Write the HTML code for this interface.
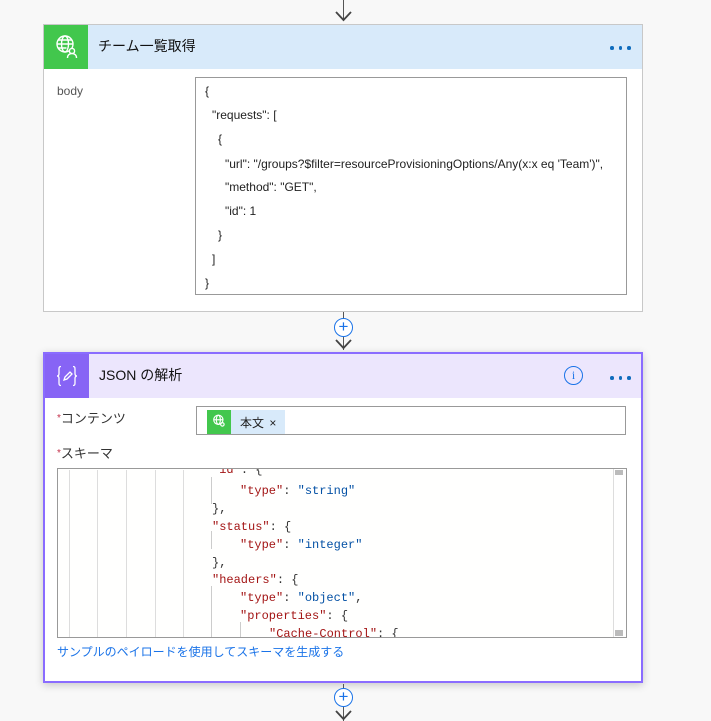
<!DOCTYPE html>
<html><head><meta charset="utf-8"><style>
*{margin:0;padding:0;box-sizing:border-box}
body{width:711px;height:721px;background:#f8f8f8;position:relative;overflow:hidden;font-family:"Liberation Sans","Noto Sans CJK JP",sans-serif;color:#222}
.a{position:absolute}
.line{position:absolute;width:1px;background:#555}
.dots{position:absolute;font-size:0}
.dots i{display:inline-block;width:3.5px;height:3.5px;border-radius:50%;background:#0f6cbd;margin-right:5px}
.t{position:absolute;font-size:12px;white-space:pre;line-height:14px}
.m{position:absolute;font-family:"Liberation Mono",monospace;font-size:12px;white-space:pre;line-height:14px;color:#333}
.k{color:#a31515}.s{color:#0451a5}
.g{position:absolute;top:1px;bottom:0;width:1px;background:#ddd}
</style></head><body>
<div class="line" style="left:343px;top:0;height:20px"></div>
<svg class="a" style="left:335px;top:10px" width="17" height="12"><path d="M1 2l7.5 8 7.5-8" fill="none" stroke="#444" stroke-width="1.8"/></svg>

<div class="a" style="left:43px;top:24px;width:600px;height:288px;background:#fff;border:1px solid #c8c8c8"></div>
<div class="a" style="left:44px;top:25px;width:598px;height:44px;background:#d8eafa"></div>
<div class="a" style="left:44px;top:25px;width:44px;height:44px;background:#42c74d"></div>
<svg class="a" style="left:54px;top:34px" width="26" height="26" viewBox="0 0 26 26" fill="none" stroke="#fff" stroke-width="1.4"><circle cx="11" cy="10" r="8"/><ellipse cx="11" cy="10" rx="3.5" ry="8"/><path d="M3 10h16M4.5 6h13M4.5 14h8"/><circle cx="18" cy="17" r="2.6" fill="#42c74d"/><path d="M13.5 24c0-3 2-4.5 4.5-4.5s4.5 1.5 4.5 4.5" fill="#42c74d"/></svg>
<div class="t" style="left:98px;top:39px;font-size:14px;color:#111">チーム一覧取得</div>
<div class="dots" style="left:610px;top:46px"><i></i><i></i><i></i></div>
<div class="t" style="left:57px;top:84px;color:#555">body</div>
<div class="a" style="left:195px;top:77px;width:432px;height:218px;border:1px solid #999;background:#fff"></div>
<div class="t" style="left:205px;top:84px">{</div>
<div class="t" style="left:212px;top:108px">"requests": [</div>
<div class="t" style="left:218px;top:132px">{</div>
<div class="t" style="left:225px;top:157px">"url": "/groups?$filter=resourceProvisioningOptions/Any(x:x eq 'Team')",</div>
<div class="t" style="left:225px;top:180px">"method": "GET",</div>
<div class="t" style="left:225px;top:204px">"id": 1</div>
<div class="t" style="left:218px;top:228px">}</div>
<div class="t" style="left:212px;top:252px">]</div>
<div class="t" style="left:205px;top:276px">}</div>

<div class="line" style="left:343px;top:312px;height:38px"></div>
<div class="a" style="left:334px;top:318px;width:19px;height:19px;border-radius:50%;border:1px solid #1a73e8;background:#fff;color:#1a73e8;font-size:17px;line-height:16px;text-align:center">+</div>
<svg class="a" style="left:335px;top:338px" width="17" height="12"><path d="M1 2l7.5 8 7.5-8" fill="none" stroke="#444" stroke-width="1.8"/></svg>

<div class="a" style="left:43px;top:352px;width:600px;height:331px;background:#fff;border:2px solid #8a6cff;box-shadow:0 2px 8px rgba(0,0,0,.2)"></div>
<div class="a" style="left:45px;top:354px;width:596px;height:44px;background:#ece6fd"></div>
<div class="a" style="left:45px;top:354px;width:44px;height:44px;background:#8764f5"></div>
<svg class="a" style="left:55px;top:364px" width="24" height="24" viewBox="0 0 24 24" fill="none" stroke="#fff" stroke-width="1.3"><path d="M6 2.5c-2 0-2 1-2 3v4c0 1.5-.7 2.5-2 2.5 1.3 0 2 1 2 2.5v4c0 2 0 3 2 3"/><path d="M18 2.5c2 0 2 1 2 3v4c0 1.5.7 2.5 2 2.5-1.3 0-2 1-2 2.5v4c0 2 0 3-2 3"/><path d="M9 16l1-3 5-5 2 2-5 5z"/></svg>
<div class="t" style="left:99px;top:368px;font-size:14px;color:#111">JSON の解析</div>
<div class="a" style="left:564px;top:366px;width:19px;height:19px;border-radius:50%;border:1.5px solid #1a73e8;color:#1a73e8;font-size:12px;line-height:16px;text-align:center;font-family:'Liberation Serif',serif">i</div>
<div class="dots" style="left:610px;top:376px"><i></i><i></i><i></i></div>

<div class="t" style="left:57px;top:412px;font-size:13px;color:#333"><span style="color:#c4314b;font-size:10px;vertical-align:top">*</span>コンテンツ</div>
<div class="a" style="left:196px;top:406px;width:430px;height:29px;border:1px solid #999"></div>
<div class="a" style="left:207px;top:410px;width:78px;height:24px;background:#d8eafa"></div>
<div class="a" style="left:207px;top:410px;width:24px;height:24px;background:#42c74d"></div>
<svg class="a" style="left:212px;top:414px" width="15" height="15" viewBox="0 0 26 26" fill="none" stroke="#fff" stroke-width="2"><circle cx="11" cy="10" r="8"/><ellipse cx="11" cy="10" rx="3.5" ry="8"/><path d="M3 10h16"/><circle cx="18" cy="18" r="3"/></svg>
<div class="t" style="left:240px;top:416px;font-size:12px">本文 <span style="margin-left:2px">×</span></div>

<div class="t" style="left:57px;top:447px;font-size:13px;color:#333"><span style="color:#c4314b;font-size:10px;vertical-align:top">*</span>スキーマ</div>
<div class="a" style="left:57px;top:468px;width:570px;height:170px;border:1px solid #999;background:#fffffe;overflow:hidden">
<div class="g" style="left:11px"></div><div class="g" style="left:39px"></div><div class="g" style="left:68px"></div><div class="g" style="left:97px"></div><div class="g" style="left:125px"></div><div class="g" style="left:153px;top:8px;height:27px;background:#ccc"></div><div class="g" style="left:153px;top:62px;height:18px;background:#ccc;bottom:auto"></div><div class="g" style="left:153px;top:117px;background:#ccc"></div><div class="g" style="left:182px;top:153px;background:#ccc"></div>
<div class="m" style="left:154px;top:-6px"><span class="k">"id"</span>: {</div>
<div class="m" style="left:182px;top:15px"><span class="k">"type"</span>: <span class="s">"string"</span></div>
<div class="m" style="left:154px;top:33px">},</div>
<div class="m" style="left:154px;top:51px"><span class="k">"status"</span>: {</div>
<div class="m" style="left:182px;top:69px"><span class="k">"type"</span>: <span class="s">"integer"</span></div>
<div class="m" style="left:154px;top:87px">},</div>
<div class="m" style="left:154px;top:104px"><span class="k">"headers"</span>: {</div>
<div class="m" style="left:182px;top:122px"><span class="k">"type"</span>: <span class="s">"object"</span>,</div>
<div class="m" style="left:182px;top:140px"><span class="k">"properties"</span>: {</div>
<div class="m" style="left:211px;top:158px"><span class="k">"Cache-Control"</span>: {</div>
<div class="a" style="left:555px;top:0;width:13px;height:168px;background:#fff;border-left:1px solid #ddd"></div>
<div class="a" style="left:557px;top:1px;width:8px;height:5px;background:#bbb"></div>
<div class="a" style="left:557px;top:161px;width:8px;height:6px;background:#bbb"></div>
</div>
<div class="t" style="left:57px;top:645px;font-size:12px;color:#1a73e8">サンプルのペイロードを使用してスキーマを生成する</div>

<div class="line" style="left:343px;top:684px;height:37px"></div>
<div class="a" style="left:334px;top:688px;width:19px;height:19px;border-radius:50%;border:1px solid #1a73e8;background:#fff;color:#1a73e8;font-size:17px;line-height:16px;text-align:center">+</div>
<svg class="a" style="left:335px;top:709px" width="17" height="12"><path d="M1 2l7.5 8 7.5-8" fill="none" stroke="#444" stroke-width="1.8"/></svg>
</body></html>
